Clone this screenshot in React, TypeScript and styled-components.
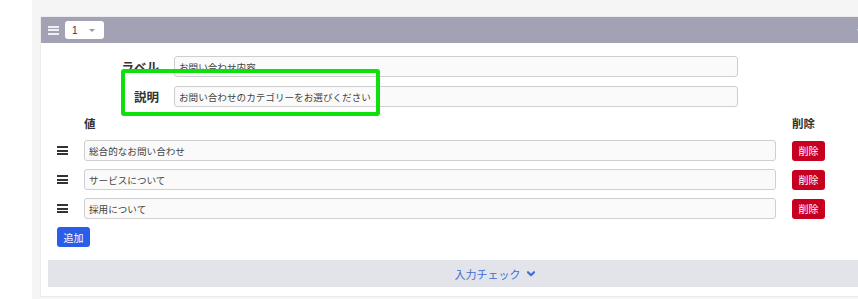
import React from "react";
import styled, { createGlobalStyle } from "styled-components";

const Global = createGlobalStyle`
  html, body { margin: 0; padding: 0; background: #fff; overflow: hidden; }
  body { font-family: "Noto Sans CJK JP", "Noto Sans", sans-serif; }
  * { box-sizing: border-box; }
`;

const Page = styled.div`
  width: 858px;
  height: 299px;
  padding-left: 32px;
  overflow: hidden;
`;

const Backdrop = styled.div`
  background: #f5f5f6;
  height: 299px;
  padding: 17px 0 0 9px;
`;

const Panel = styled.div`
  position: relative;
  width: 830px;
  height: 279px;
  background: #fff;
  box-shadow: 0 0 0 1px #ececef;
`;

const Header = styled.div`
  height: 26px;
  background: #a3a2b4;
  display: flex;
  align-items: center;
  padding-left: 7px;
  gap: 6px;
`;

const HeaderTail = styled.span`
  margin-left: auto;
  color: #fff;
  font-weight: 700;
  font-size: 12px;
  margin-right: 3px;
`;

const Burger = styled.span<{ $color: string }>`
  display: inline-flex;
  flex-direction: column;
  justify-content: space-between;
  width: 11px;
  height: 9px;
  & > i {
    display: block;
    height: 2px;
    background: ${(p) => p.$color};
  }
`;

const Select = styled.div`
  width: 39px;
  height: 18px;
  background: #fff;
  border-radius: 3px;
  display: flex;
  align-items: center;
  padding-left: 7px;
  font-size: 10px;
  color: #333;
  font-family: "Liberation Sans", sans-serif;
  gap: 11px;
`;

const Caret = styled.span`
  width: 0;
  height: 0;
  border-left: 3px solid transparent;
  border-right: 3px solid transparent;
  border-top: 3px solid #999;
`;

const Meta = styled.div`
  display: grid;
  grid-template-columns: 118px 564px;
  column-gap: 15px;
  row-gap: 9px;
  align-items: center;
  padding: 13px 0 0 0;
`;

const MetaLabel = styled.div`
  text-align: right;
  font-size: 12.5px;
  font-weight: 700;
  color: #333;
`;

const TextBox = styled.div<{ $w: number }>`
  width: ${(p) => p.$w}px;
  height: 21px;
  border: 1px solid #cfcfcf;
  border-radius: 3px;
  background: #fafafa;
  font-size: 9.6px;
  color: #444;
  display: flex;
  align-items: center;
  padding-left: 4px;
  white-space: nowrap;
  overflow: hidden;
`;

const ValuesHead = styled.div`
  display: flex;
  align-items: center;
  padding: 7px 0 0 43px;
  height: 25px;
  font-size: 11.5px;
  font-weight: 700;
  color: #333;
`;

const HeadLeft = styled.span`
  width: 708px;
`;

const Rows = styled.div`
  display: flex;
  flex-direction: column;
  gap: 8px;
  padding: 8px 0 0 16px;
`;

const Row = styled.div`
  display: flex;
  align-items: center;
`;

const BurgerCell = styled.div`
  width: 27px;
  display: flex;
  align-items: center;
`;

const SmallButton = styled.div<{ $bg: string }>`
  width: 33px;
  height: 20px;
  border-radius: 3px;
  background: ${(p) => p.$bg};
  color: #fff;
  font-size: 10px;
  display: flex;
  align-items: center;
  justify-content: center;
`;

const DeleteButton = styled(SmallButton)`
  margin-left: 16px;
`;

const AddRow = styled.div`
  padding: 8px 0 0 16px;
`;

const Footer = styled.div`
  margin: 13px 0 0 7px;
  height: 27px;
  background: #e3e4e9;
  display: flex;
  align-items: center;
  justify-content: center;
  padding-left: 70px;
  font-size: 11px;
  color: #3c6fd8;
`;

const FooterInner = styled.div`
  display: flex;
  align-items: center;
  gap: 6px;
`;

const Highlight = styled.div`
  position: absolute;
  left: 80px;
  top: 52px;
  width: 259px;
  height: 47px;
  border: 4px solid #0de00d;
  border-radius: 3px;
  pointer-events: none;
`;

const values = ["総合的なお問い合わせ", "サービスについて", "採用について"];

const Lines = ({ color }: { color: string }) => (
  <Burger $color={color}>
    <i />
    <i />
    <i />
  </Burger>
);

export default function App() {
  return (
    <>
      <Global />
      <Page>
        <Backdrop>
          <Panel>
            <Header>
              <Lines color="#eeeef3" />
              <Select>
                1<Caret />
              </Select>
              <HeaderTail>ラ</HeaderTail>
            </Header>
            <Meta>
              <MetaLabel>ラベル</MetaLabel>
              <TextBox $w={564}>お問い合わせ内容</TextBox>
              <MetaLabel>説明</MetaLabel>
              <TextBox $w={564}>お問い合わせのカテゴリーをお選びください</TextBox>
            </Meta>
            <ValuesHead>
              <HeadLeft>値</HeadLeft>
              <span>削除</span>
            </ValuesHead>
            <Rows>
              {values.map((v) => (
                <Row key={v}>
                  <BurgerCell>
                    <Lines color="#333" />
                  </BurgerCell>
                  <TextBox $w={692}>{v}</TextBox>
                  <DeleteButton $bg="#c8001f">削除</DeleteButton>
                </Row>
              ))}
            </Rows>
            <AddRow>
              <SmallButton $bg="#2a5de8">追加</SmallButton>
            </AddRow>
            <Footer>
              <FooterInner>
                入力チェック
                <svg width="8" height="6" viewBox="0 0 8 6">
                  <path d="M1 1.2 L4 4.2 L7 1.2" fill="none" stroke="#3c6fd8" strokeWidth="2.2" strokeLinecap="round" strokeLinejoin="round" />
                </svg>
              </FooterInner>
            </Footer>
            <Highlight />
          </Panel>
        </Backdrop>
      </Page>
    </>
  );
}
